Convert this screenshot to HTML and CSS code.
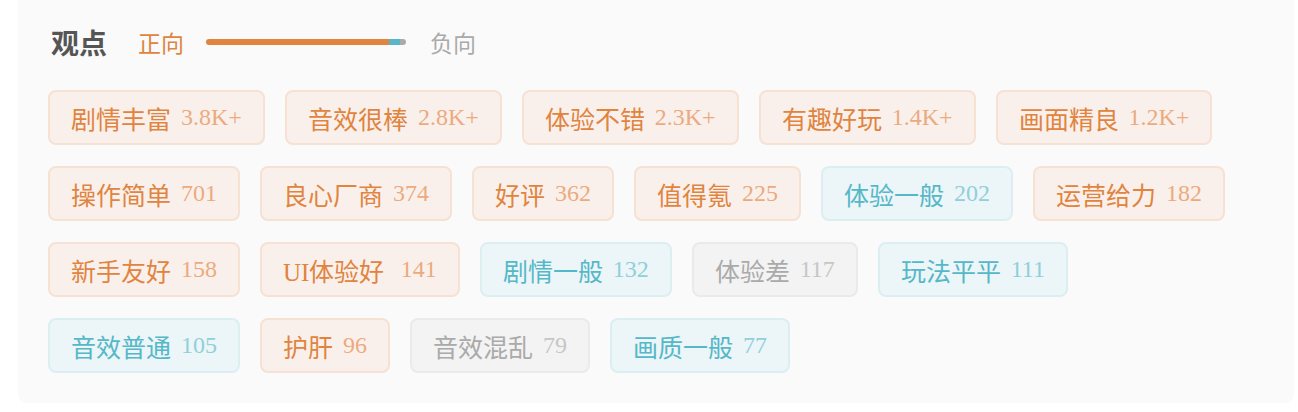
FILE: index.html
```html
<!DOCTYPE html>
<html lang="zh-CN">

<head>
    <meta charset="UTF-8">
    <meta name="viewport" content="width=device-width, initial-scale=1.0">
    <title>观点</title>
    <link rel="stylesheet" href="styles.css">
</head>

<body>
    <div class="panel">
        <div class="header">
            <span class="title">观点</span>
            <span class="pos">正向</span>
            <div class="bar">
                <div class="bar-pos" style="width: 183px"></div>
                <div class="bar-neu" style="width: 11px"></div>
                <div class="bar-neg" style="width: 6px"></div>
            </div>
            <span class="neg">负向</span>
        </div>
        <div class="tags">
            <div class="tag good">剧情丰富<span class="num">3.8K+</span></div>
            <div class="tag good">音效很棒<span class="num">2.8K+</span></div>
            <div class="tag good">体验不错<span class="num">2.3K+</span></div>
            <div class="tag good">有趣好玩<span class="num">1.4K+</span></div>
            <div class="tag good">画面精良<span class="num">1.2K+</span></div>
            <div class="tag good">操作简单<span class="num">701</span></div>
            <div class="tag good">良心厂商<span class="num">374</span></div>
            <div class="tag good">好评<span class="num">362</span></div>
            <div class="tag good">值得氪<span class="num">225</span></div>
            <div class="tag mid">体验一般<span class="num">202</span></div>
            <div class="tag good">运营给力<span class="num">182</span></div>
            <div class="tag good">新手友好<span class="num">158</span></div>
            <div class="tag good">UI体验好&nbsp;<span class="num">141</span></div>
            <div class="tag mid">剧情一般<span class="num">132</span></div>
            <div class="tag bad">体验差<span class="num">117</span></div>
            <div class="tag mid">玩法平平<span class="num">111</span></div>
            <div class="tag mid">音效普通<span class="num">105</span></div>
            <div class="tag good">护肝<span class="num">96</span></div>
            <div class="tag bad">音效混乱<span class="num">79</span></div>
            <div class="tag mid">画质一般<span class="num">77</span></div>
        </div>
    </div>
</body>

</html>
```

FILE: styles.css
```css
* {
    box-sizing: border-box;
}

body {
    margin: 0;
    background-color: white;
    font-family: "Liberation Serif", serif;
}

.panel {
    margin-left: 18px;
    width: 1276px;
    padding: 22px 30px 30px 30px;
    background-color: #fafafa;
    border-radius: 0 0 8px 8px;
}

.header {
    display: flex;
    align-items: center;
    height: 40px;
    margin-bottom: 28px;
}

.title {
    font-family: "Noto Sans CJK SC", sans-serif;
    font-weight: bold;
    font-size: 28px;
    color: #555;
    margin-left: 3px;
    margin-right: 31px;
}

.pos {
    font-size: 23px;
    color: #e0843f;
}

.neg {
    font-size: 23px;
    color: #aaa;
}

.bar {
    display: flex;
    width: 200px;
    height: 6px;
    margin: 0 24px 0 22px;
    border-radius: 3px;
    overflow: hidden;
}

.bar-pos {
    background-color: #e0843f;
}

.bar-neu {
    background-color: #57b7c6;
}

.bar-neg {
    background-color: #aaa;
}

.tags {
    display: flex;
    flex-wrap: wrap;
    gap: 21px 20px;
}

.tag {
    display: flex;
    align-items: center;
    height: 55px;
    padding: 0 21px;
    border: 2px solid;
    border-radius: 8px;
    font-size: 25px;
}

.num {
    font-size: 24px;
    margin-left: 10px;
}

.good {
    background-color: #faf0eb;
    border-color: #f6e1d3;
    color: #e0843f;
}

.good .num {
    color: #ebab7f;
}

.mid {
    background-color: #ecf5f7;
    border-color: #dbeff3;
    color: #55b8c8;
}

.mid .num {
    color: #8fd0da;
}

.bad {
    background-color: #f3f3f3;
    border-color: #eaeaea;
    color: #aaa;
}

.bad .num {
    color: #c6c6c6;
}
```
